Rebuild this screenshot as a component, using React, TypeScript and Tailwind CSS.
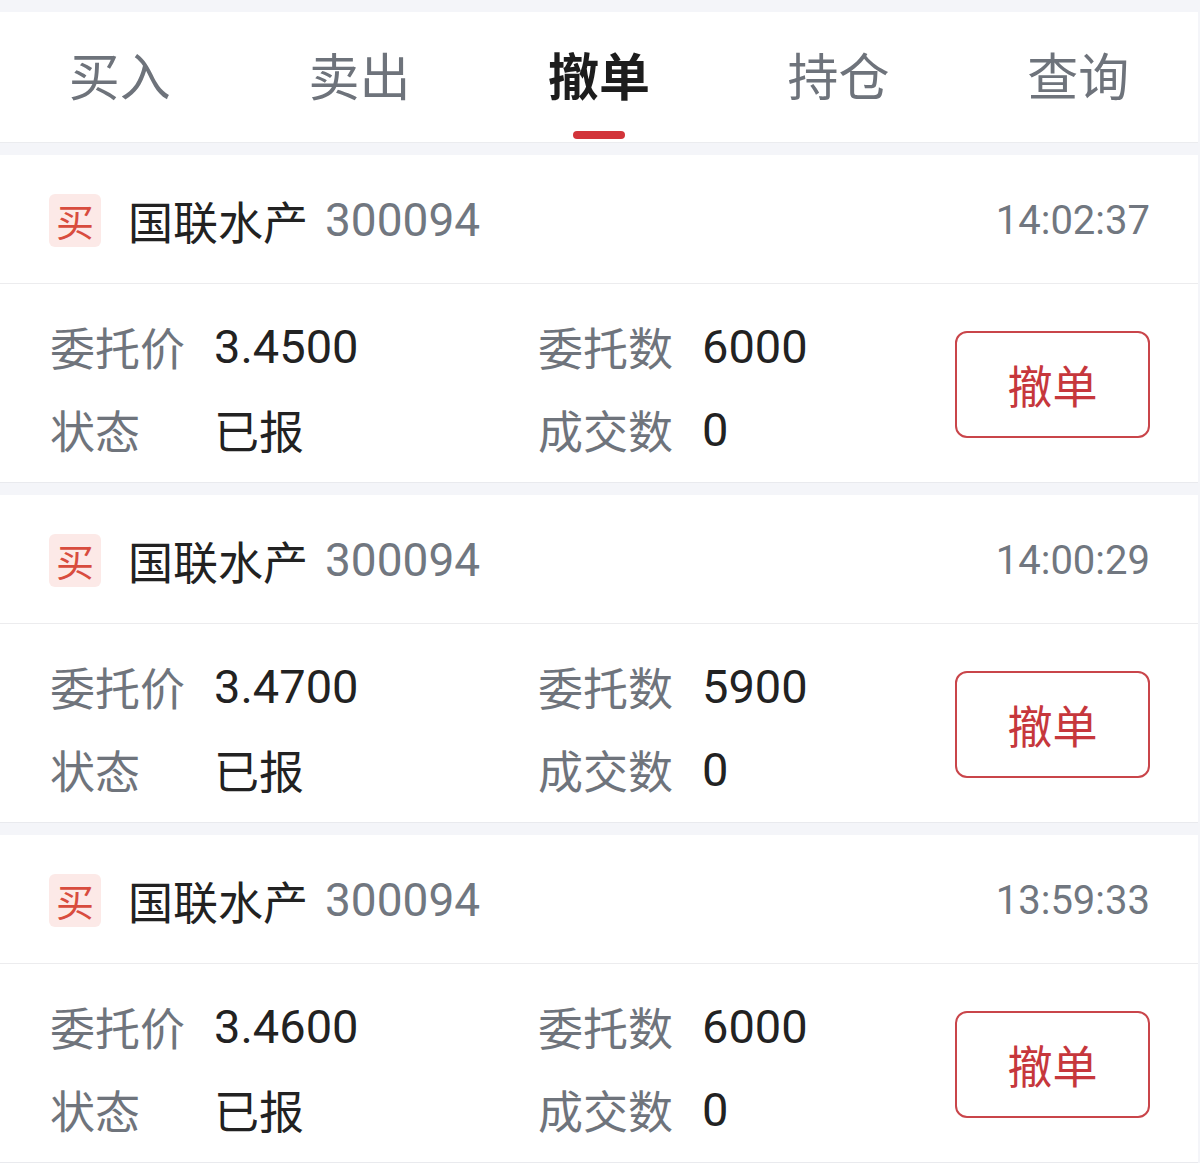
const cjk = "font-['Noto_Sans_CJK_SC',sans-serif]";
const num = "font-['Roboto','Noto_Sans_CJK_SC',sans-serif]";

const tabs = ["买入", "卖出", "撤单", "持仓", "查询"];

const orders = [
  { name: "国联水产", code: "300094", time: "14:02:37", price: "3.4500", qty: "6000", filled: "0", status: "已报" },
  { name: "国联水产", code: "300094", time: "14:00:29", price: "3.4700", qty: "5900", filled: "0", status: "已报" },
  { name: "国联水产", code: "300094", time: "13:59:33", price: "3.4600", qty: "6000", filled: "0", status: "已报" },
];

function OrderCard({ o }: { o: (typeof orders)[number] }) {
  return (
    <div className="bg-white mr-[2px]">
      <div className="h-[129px] flex items-center pl-[49px] pr-[48px] border-b border-[#ececee]">
        <div className={`w-[52px] h-[53px] mt-[2px] rounded-[6px] bg-[#fce9e7] text-[#d84c3e] text-[38px] leading-none flex items-center justify-center ${cjk}`}>
          买
        </div>
        <div className={`ml-[27px] mt-[2px] text-[45px] leading-none text-[#222] ${cjk}`}>{o.name}</div>
        <div className={`ml-[17px] mt-[2px] text-[46px] leading-none text-[#717780] ${num}`}>{o.code}</div>
        <div className={`ml-auto mt-[3px] text-[40px] leading-none text-[#717780] ${num}`}>{o.time}</div>
      </div>
      <div className="h-[198px] flex items-center pl-[50px] pr-[48px]">
        <div className="flex-1 grid grid-cols-[164px_324px_164px_1fr] grid-rows-[83px_83px] items-center mt-[10px]">
          <div className={`text-[45px] leading-none text-[#6f747c] ${cjk}`}>委托价</div>
          <div className={`text-[47px] leading-none text-[#222] ${num}`}>{o.price}</div>
          <div className={`text-[45px] leading-none text-[#6f747c] ${cjk}`}>委托数</div>
          <div className={`text-[47px] leading-none text-[#222] ${num}`}>{o.qty}</div>
          <div className={`text-[45px] leading-none text-[#6f747c] ${cjk}`}>状态</div>
          <div className={`text-[45px] leading-none text-[#222] ${cjk}`}>{o.status}</div>
          <div className={`text-[45px] leading-none text-[#6f747c] ${cjk}`}>成交数</div>
          <div className={`text-[47px] leading-none text-[#222] ${num}`}>{o.filled}</div>
        </div>
        <button
          type="button"
          className={`w-[195px] h-[107px] mt-[2px] rounded-[12px] border-2 border-[#c9454a] text-[#c6373c] text-[45px] leading-none flex items-center justify-center ${cjk}`}
        >
          撤单
        </button>
      </div>
      <div className="h-[13px] border-t border-[#e9eaee] bg-[#f4f5f9]" />
    </div>
  );
}

export default function App() {
  return (
    <div className="w-[1200px] h-[1163px] overflow-hidden bg-[#f4f5f9]">
      <div className="h-[12px]" />
      <div className="h-[131px] bg-white mr-[2px] border-b border-[#ebecef] grid grid-cols-5">
        {tabs.map((t, i) => {
          const active = i === 2;
          return (
            <div key={t} className="relative flex items-center justify-center">
              <span
                className={`text-[51px] leading-none -mt-[6px] ${cjk} ${active ? "text-[#1d1d1d] font-bold" : "text-[#6e737b]"}`}
              >
                {t}
              </span>
              {active && (
                <div className="absolute bottom-[3px] left-1/2 -translate-x-1/2 w-[52px] h-[8px] rounded-full bg-[#d2343a]" />
              )}
            </div>
          );
        })}
      </div>
      <div className="h-[12px]" />
      {orders.map((o, i) => (
        <OrderCard key={i} o={o} />
      ))}
    </div>
  );
}
